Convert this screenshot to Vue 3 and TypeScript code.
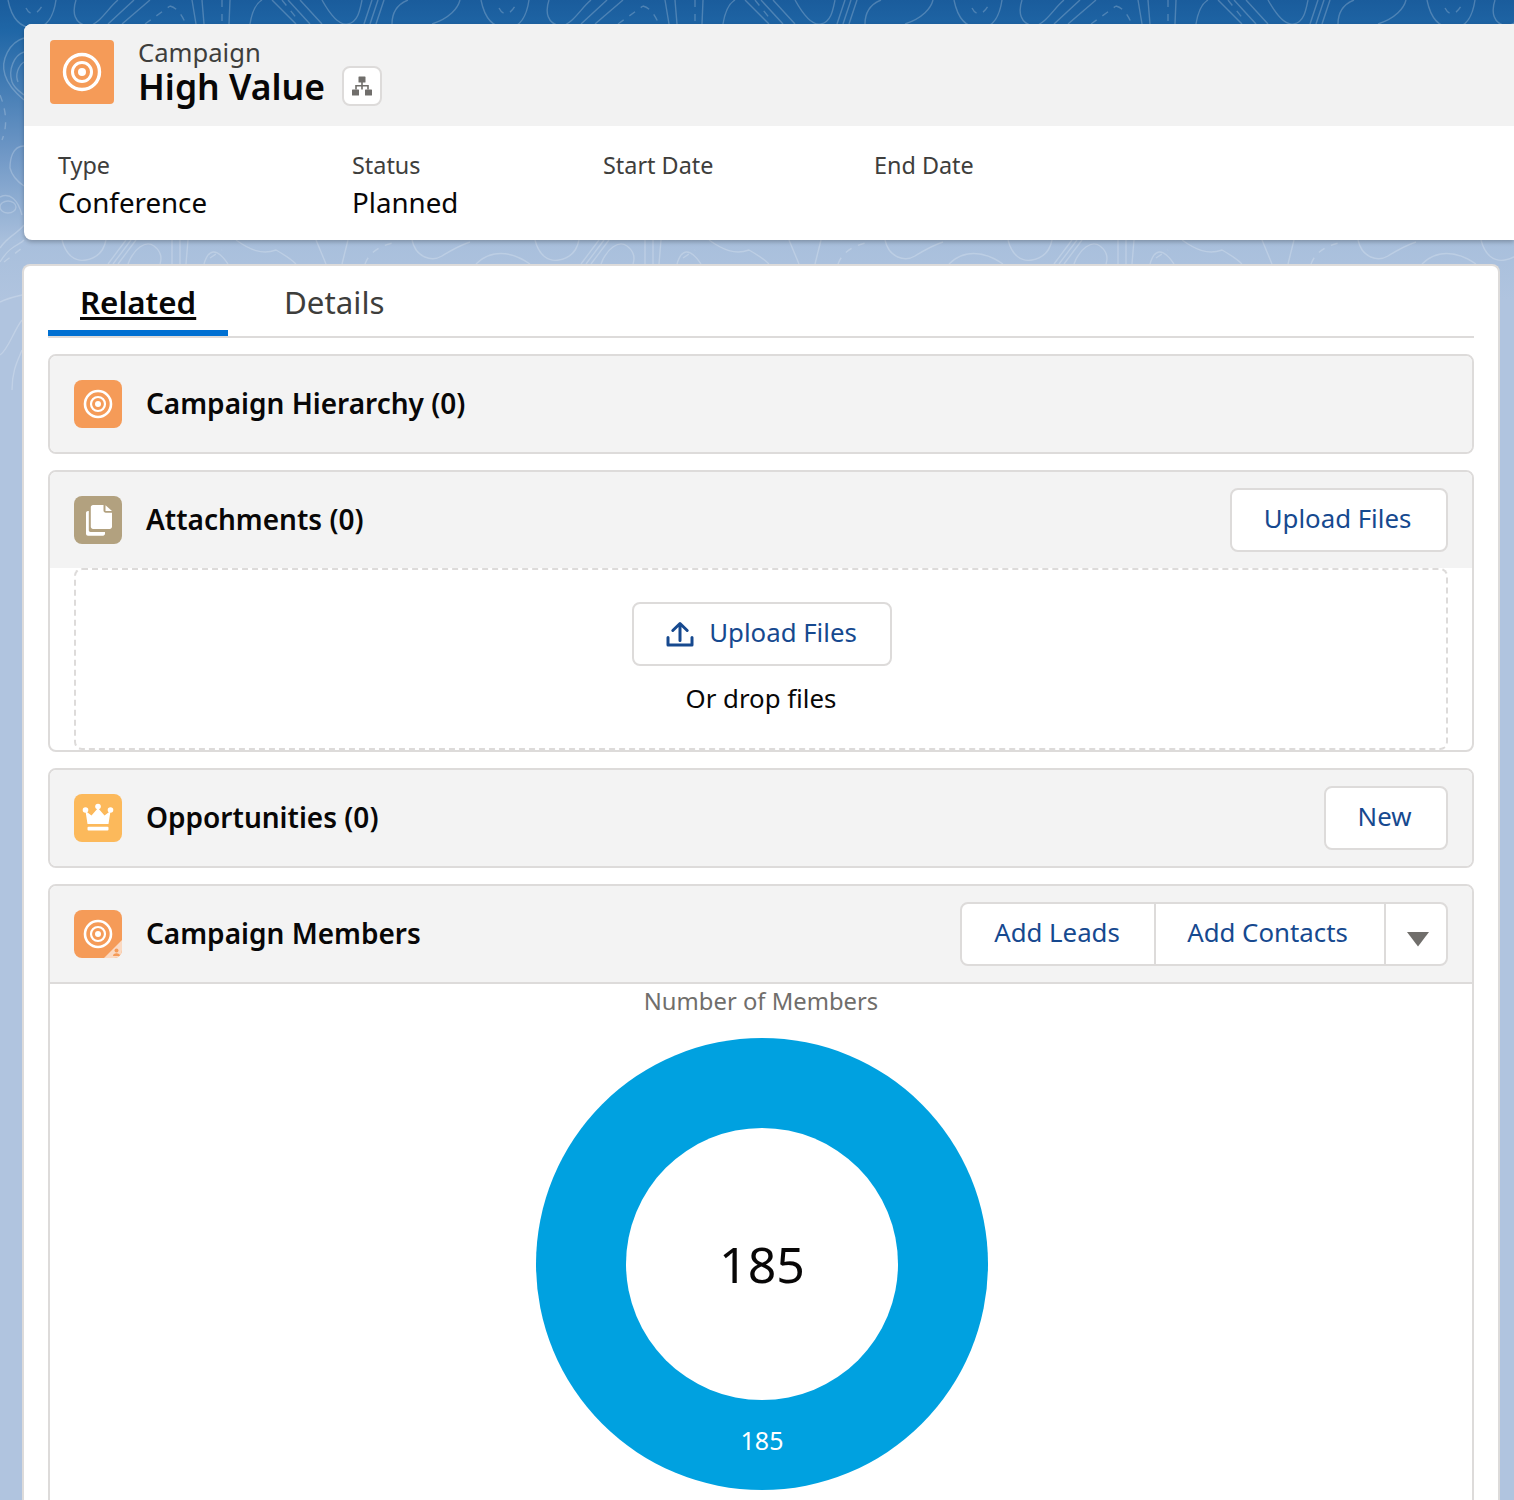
<template>
  <div class="page">
    <svg class="topo" width="1514" height="560" viewBox="0 0 1514 560" fill="none">
      <g v-for="offset in tileOffsets" :key="offset" :transform="`translate(${offset} 0)`">
        <path v-for="d in topoLines" :key="d" :d="d" />
        <path v-for="d in topoDashes" :key="d" :d="d" stroke-dasharray="7 7" />
      </g>
      <path v-for="d in leftLines" :key="d" :d="d" />
      <path d="M0 95C6 110 8 125 2 140M4 262L22 248" stroke-dasharray="7 7" />
      <ellipse cx="8" cy="207" rx="8" ry="6" />
    </svg>

    <div class="record-card">
      <div class="record-head">
        <span class="record-icon">
          <svg viewBox="0 0 64 64" width="64" height="64" fill="none" stroke="#fff">
            <circle cx="32" cy="32" r="17.5" stroke-width="3.4" />
            <circle cx="32" cy="32" r="9.5" stroke-width="3" />
            <circle cx="32" cy="32" r="4" fill="#fff" stroke="none" />
          </svg>
        </span>
        <div class="record-titles">
          <div class="record-type">Campaign</div>
          <div class="record-name-row">
            <span class="record-name">High Value</span>
            <span class="hier-btn">
              <svg viewBox="0 0 20 20" width="20" height="20" fill="#706e6b">
                <rect x="6.5" y="0.5" width="7" height="6" rx="0.6" />
                <rect x="0" y="13.5" width="7" height="6" rx="0.6" />
                <rect x="13" y="13.5" width="7" height="6" rx="0.6" />
                <path d="M9.2 6h1.6v3h6v4.5h-1.6V10.600H10.800v2.900H9.200v-2.900H4.800v2.900H3.200V9h6z" />
              </svg>
            </span>
          </div>
        </div>
      </div>
      <div class="record-fields">
        <div v-for="field in fields" :key="field.label" class="field" :style="{ width: field.width + 'px' }">
          <div class="field-label">{{ field.label }}</div>
          <div class="field-value">{{ field.value }}</div>
        </div>
      </div>
    </div>

    <div class="main-card">
      <div class="tabs">
        <a class="tab active">Related</a>
        <a class="tab">Details</a>
      </div>

      <section class="panel">
        <header class="panel-head">
          <span class="panel-icon orange">
            <svg viewBox="0 0 48 48" width="48" height="48" fill="none" stroke="#fff">
              <circle cx="24" cy="24" r="13" stroke-width="2.6" />
              <circle cx="24" cy="24" r="7" stroke-width="2.2" />
              <circle cx="24" cy="24" r="3" fill="#fff" stroke="none" />
            </svg>
          </span>
          <h2>Campaign Hierarchy (0)</h2>
        </header>
      </section>

      <section class="panel">
        <header class="panel-head">
          <span class="panel-icon tan">
            <svg viewBox="0 0 48 48" width="48" height="48" fill="#fff">
              <path d="M19 9h10.500v5.500c0 1.300 1 2.200 2.200 2.200H38v14.100c0 1.200-1 2.200-2.200 2.200H19c-1.200 0-2.200-1-2.200-2.200V11.200C16.800 10 17.800 9 19 9z" />
              <path d="M31.500 9.300 38 15h-6.500z" />
              <path d="M14.800 15v19.300c0 .9.800 1.700 1.700 1.700H31v1.800c0 1-.9 1.900-1.900 1.900H14c-1.100 0-2-.9-2-2V17c0-1.100.9-2 2-2z" />
            </svg>
          </span>
          <h2>Attachments (0)</h2>
          <button class="btn" type="button">Upload Files</button>
        </header>
        <div class="dropzone">
          <button class="btn drop-btn" type="button">
            <svg viewBox="0 0 28 28" width="28" height="28" fill="none" stroke="#16498f" stroke-width="3">
              <path d="M2 17.500v7.500h24v-7.500" stroke-linejoin="round" stroke-linecap="round" />
              <path d="M14 20.500V4M6.800 10.500 14 3.500l7.200 7" stroke-linecap="round" stroke-linejoin="round" />
            </svg>
            Upload Files
          </button>
          <div class="drop-text">Or drop files</div>
        </div>
      </section>

      <section class="panel">
        <header class="panel-head">
          <span class="panel-icon yellow">
            <svg viewBox="0 0 48 48" width="48" height="48" fill="#fff">
              <circle cx="11.500" cy="16" r="2.800" />
              <circle cx="24" cy="12.500" r="2.800" />
              <circle cx="36.500" cy="16" r="2.800" />
              <path d="M11.500 17l6 4.500L24 14l6.500 7.500 6-4.500-2 13h-21z" />
              <rect x="13.500" y="32.800" width="21" height="3.600" rx="1" />
            </svg>
          </span>
          <h2>Opportunities (0)</h2>
          <button class="btn new-btn" type="button">New</button>
        </header>
      </section>

      <section class="panel members">
        <header class="panel-head ruled">
          <span class="panel-icon orange badge-wrap">
            <svg viewBox="0 0 48 48" width="48" height="48" fill="none" stroke="#fff">
              <circle cx="24" cy="24" r="13" stroke-width="2.6" />
              <circle cx="24" cy="24" r="7" stroke-width="2.2" />
              <circle cx="24" cy="24" r="3" fill="#fff" stroke="none" />
              <path d="M48 30v14a4 4 0 0 1-4 4H30z" fill="#fad9c2" stroke="none" />
              <circle cx="42.500" cy="40.500" r="2" fill="#f59b58" stroke="none" />
              <path d="M39 46c0-2 1.500-2.800 3.500-2.800S46 44 46 46z" fill="#f59b58" stroke="none" />
            </svg>
          </span>
          <h2>Campaign Members</h2>
          <div class="btn-group">
            <button class="group-btn leads" type="button">Add Leads</button>
            <button class="group-btn contacts" type="button">Add Contacts</button>
            <button class="group-btn more" type="button" aria-label="More">
              <svg viewBox="0 0 24 16" width="24" height="16" fill="#706e6b">
                <path d="M1 1h22L12 15.500z" />
              </svg>
            </button>
          </div>
        </header>
        <div class="chart">
          <div class="chart-title">Number of Members</div>
          <div class="donut">
            <div class="donut-hole">{{ total }}</div>
            <div class="donut-label">{{ total }}</div>
          </div>
        </div>
      </section>
    </div>
  </div>
</template>

<script setup lang="ts">
interface Field {
  label: string
  value: string
  width: number
}

const total = 185

const fields: Field[] = [
  { label: 'Type', value: 'Conference', width: 294 },
  { label: 'Status', value: 'Planned', width: 251 },
  { label: 'Start Date', value: '', width: 271 },
  { label: 'End Date', value: '', width: 200 }
]

// the contour backdrop repeats every 473px, only the strips around the cards show it
const tileOffsets = [0, 473, 946, 1419]

const topoLines: string[] = [
  'M8 0C12 20 22 28 34 28C48 28 54 14 56 0',
  'M76 0C72 12 74 24 88 26C100 24 108 8 118 0',
  'M108 24L134 0',
  'M122 24L150 0',
  'M192 0L196 24',
  'M202 0L204 24',
  'M230 0L229 24',
  'M250 24C252 12 255 4 262 0',
  'M272 0L296 24',
  'M288 0L310 24',
  'M300 0L322 24',
  'M322 0C332 18 340 26 348 24C358 22 360 10 362 0',
  'M364 24L372 0',
  'M370 24L378 0',
  'M376 24L384 0',
  'M392 24C392 12 398 4 408 0',
  'M432 24C450 18 458 8 460 0',
  'M62 240C66 256 76 262 86 260C98 258 104 250 106 240',
  'M108 264L126 240',
  'M113 264L131 240',
  'M118 264L136 240',
  'M128 264C134 248 146 240 154 246C162 252 162 258 160 264',
  'M172 240V264',
  'M180 240V264',
  'M188 240L186 264',
  'M204 264C208 250 216 246 228 264',
  'M236 240C250 250 262 255 276 250C290 258 294 262 296 264',
  'M316 240L326 264',
  'M348 240L342 264',
  'M412 240C416 258 432 262 442 256C452 250 458 246 470 242',
  'M476 264C490 250 510 250 530 264'
]

const topoDashes: string[] = [
  'M26 8C30 16 36 16 42 6',
  'M145 24L170 6',
  'M170 6C178 8 182 16 186 24',
  'M222 0V24',
  'M282 0L298 20',
  'M365 264C370 250 385 244 398 242',
  'M210 258L222 250'
]

const leftLines: string[] = [
  'M24 38C10 42 0 60 5 75C8 85 18 95 24 100',
  'M24 52C14 55 8 70 12 82C14 88 20 92 24 95',
  'M24 62C18 66 15 75 18 82',
  'M24 146C12 146 10 160 10 168C12 176 18 182 24 186',
  'M0 197C10 192 18 200 22 215',
  'M0 248C8 236 16 235 24 225',
  'M0 262C10 245 20 245 24 240',
  'M0 302C8 298 18 296 22 295',
  'M0 355C8 350 14 330 22 320',
  'M12 390C12 370 18 360 22 350'
]
</script>

<style scoped>
.page {
  position: relative;
  width: 1514px;
  height: 1500px;
  overflow: hidden;
  background: linear-gradient(180deg, #1a5c9c 0, #1f66a6 30px, #6d96c5 150px, #a8bfdc 240px, #b0c4df 300px);
  font-family: "Noto Sans", "Open Sans", sans-serif;
  color: #080707;
}

.topo {
  position: absolute;
  left: 0;
  top: 0;
  stroke: rgba(255, 255, 255, 0.22);
  stroke-width: 1.4;
}

.record-card {
  position: relative;
  margin: 24px 0 0 24px;
  background: #fff;
  border-radius: 8px 0 0 8px;
  box-shadow: 0 2px 4px rgba(0, 0, 0, 0.25);
  overflow: hidden;
}

.record-head {
  display: flex;
  align-items: flex-start;
  gap: 24px;
  box-sizing: border-box;
  height: 102px;
  padding: 16px 0 0 26px;
  background: #f2f2f2;
}

.record-icon {
  display: flex;
  width: 64px;
  height: 64px;
  border-radius: 4px;
  background: #f59b58;
}

.record-type {
  margin-top: -2px;
  font-size: 25.6px;
  line-height: 30px;
  color: #3e3e3c;
}

.record-name-row {
  display: flex;
  align-items: center;
  gap: 17px;
  height: 40px;
  margin-top: -2px;
}

.record-name {
  font-size: 35.5px;
  line-height: 40px;
  font-weight: 600;
}

.hier-btn {
  display: flex;
  align-items: center;
  justify-content: center;
  box-sizing: border-box;
  width: 40px;
  height: 40px;
  border: 2px solid #dddbda;
  border-radius: 8px;
  background: #fff;
}

.record-fields {
  display: flex;
  height: 114px;
  box-sizing: border-box;
  padding: 23px 0 0 34px;
}

.field-label {
  font-size: 23.400px;
  line-height: 32px;
  color: #3e3e3c;
}

.field-value {
  font-size: 27.700px;
  line-height: 43px;
}

.main-card {
  position: relative;
  box-sizing: border-box;
  width: 1478px;
  height: 1300px;
  margin: 24px 0 0 22px;
  padding: 0 24px;
  background: #fff;
  border: 2px solid #dddbda;
  border-bottom: 0;
  border-radius: 8px 8px 0 0;
}

.tabs {
  display: flex;
  height: 70px;
  margin-bottom: 16px;
  border-bottom: 2px solid #dddbda;
  gap: 24px;
}

.tab {
  box-sizing: border-box;
  height: 70px;
  padding: 15px 32px 0;
  font-size: 31.300px;
  line-height: 42px;
  color: #3e3e3c;
}

.tab.active {
  width: 180px;
  font-weight: 600;
  color: #080707;
  text-decoration: underline;
  text-decoration-thickness: 3px;
  text-underline-offset: 3px;
  border-bottom: 6px solid #0070d2;
}

.panel {
  margin-bottom: 16px;
  background: #fff;
  border: 2px solid #dddbda;
  border-radius: 8px;
  overflow: hidden;
}

.panel-head {
  display: flex;
  align-items: center;
  gap: 24px;
  box-sizing: border-box;
  height: 96px;
  padding: 0 24px;
  background: #f3f3f3;
}

.panel-head.ruled {
  height: 98px;
  border-bottom: 2px solid #dddbda;
}

.panel-head h2 {
  flex: 1;
  margin: 0;
  padding-bottom: 2px;
  font-size: 28px;
  line-height: 36px;
  font-weight: 600;
}

.panel-icon {
  display: flex;
  flex: none;
  width: 48px;
  height: 48px;
  border-radius: 8px;
  overflow: hidden;
}

.orange {
  background: #f59b58;
}

.tan {
  background: #b2a17f;
}

.yellow {
  background: #fcb95b;
}

.btn {
  box-sizing: border-box;
  display: inline-flex;
  align-items: center;
  justify-content: center;
  width: 218px;
  height: 64px;
  padding: 0 3px 4px 0;
  background: #fff;
  border: 2px solid #dddbda;
  border-radius: 8px;
  font-family: inherit;
  font-size: 25.800px;
  color: #16498f;
}

.new-btn {
  width: 124px;
}

.dropzone {
  box-sizing: border-box;
  height: 182px;
  margin: 0 24px;
  padding-top: 32px;
  border: 2px dashed #dddbda;
  border-radius: 8px;
  text-align: center;
}

.drop-btn {
  width: 260px;
  gap: 15px;
  margin-left: 2px;
  padding-right: 1px;
}

.drop-btn svg {
  margin-top: 4px;
}

.drop-text {
  margin-top: 14px;
  font-size: 25.800px;
  line-height: 36px;
}

.btn-group {
  display: flex;
  box-sizing: border-box;
  height: 64px;
  background: #fff;
  border: 2px solid #dddbda;
  border-radius: 8px;
}

.group-btn {
  box-sizing: border-box;
  height: 60px;
  padding: 0 2px 4px 0;
  background: none;
  border: 0;
  border-right: 2px solid #dddbda;
  font-family: inherit;
  font-size: 25.800px;
  color: #16498f;
}

.leads {
  width: 194px;
}

.contacts {
  width: 230px;
  padding-right: 5px;
}

.more {
  display: flex;
  align-items: center;
  justify-content: center;
  width: 60px;
  padding: 10px 0 0 4px;
  border-right: 0;
}

.chart {
  display: flex;
  flex-direction: column;
  align-items: center;
  height: 600px;
}

.chart-title {
  margin-top: 1px;
  font-size: 23.800px;
  line-height: 32px;
  color: #706e6b;
}

.donut {
  position: relative;
  display: flex;
  align-items: center;
  justify-content: center;
  width: 452px;
  height: 452px;
  margin: 21px 0 0 2px;
  border-radius: 50%;
  background: #00a1e0;
}

.donut-hole {
  display: flex;
  align-items: center;
  justify-content: center;
  width: 272px;
  height: 272px;
  border-radius: 50%;
  background: #fff;
  font-size: 50px;
}

.donut-label {
  position: absolute;
  left: 0;
  right: 0;
  bottom: 34px;
  text-align: center;
  font-size: 25px;
  line-height: 32px;
  color: #fff;
}
</style>

<style>
html,
body {
  margin: 0;
  background: #b0c4df;
}
</style>
